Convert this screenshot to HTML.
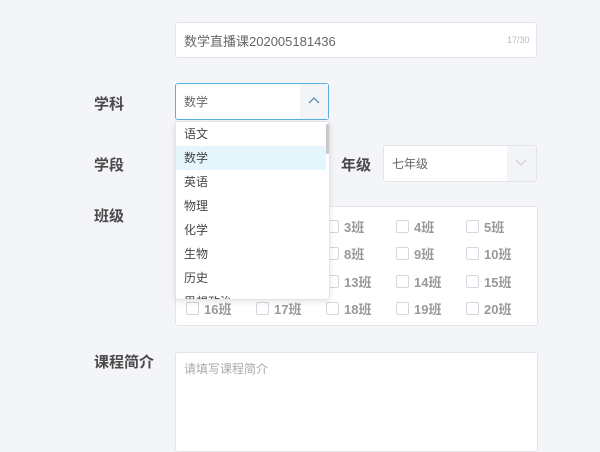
<!DOCTYPE html>
<html><head><meta charset="utf-8"><style>
*{box-sizing:border-box;margin:0;padding:0}
body{width:600px;height:435px;overflow:hidden;background:#f4f5f9;font-family:"Liberation Sans","Noto Sans CJK SC",sans-serif;position:relative;color:#555}
.a{position:absolute}
.box{position:absolute;background:#fff;border:1px solid #e2e4ea;border-radius:3px}
.lbl{position:absolute;font-size:15px;font-weight:bold;color:#4a4a4a}
.cb{position:absolute;width:13px;height:13px;border:1px solid #d4d7de;border-radius:2px;background:#fff}
.ct{position:absolute;font-size:13px;font-weight:bold;color:#999}
.it{position:absolute;left:0;width:150px;height:24px;line-height:24px;padding-left:8px;font-size:12px;color:#444}
</style></head><body>
<div class="box" style="left:175px;top:22px;width:362px;height:36px"></div>
<div class="a" style="left:184px;top:31px;font-size:13px;color:#666">数学直播课202005181436</div>
<div class="a" style="left:507px;top:35px;font-size:9px;color:#bbb">17/30</div>

<div class="lbl" style="left:94px;top:93px">学科</div>
<div class="box" style="left:175px;top:83px;width:154px;height:37px;border-color:#5aaee0"></div>
<div class="a" style="left:300px;top:84px;width:28px;height:35px;background:#f3f4f7"></div>
<div class="a" style="left:184px;top:93px;font-size:12px;color:#666">数学</div>
<svg class="a" style="left:307px;top:96px" width="14" height="10"><path d="M2 7 L7 2 L12 7" fill="none" stroke="#5a8fb0" stroke-width="1.3"/></svg>

<div class="lbl" style="left:94px;top:154px">学段</div>
<div class="lbl" style="left:341px;top:154px">年级</div>
<div class="box" style="left:383px;top:145px;width:154px;height:37px"></div>
<div class="a" style="left:507px;top:146px;width:29px;height:35px;background:#f3f4f7"></div>
<div class="a" style="left:392px;top:155px;font-size:12px;color:#666">七年级</div>
<svg class="a" style="left:514px;top:158px" width="14" height="10"><path d="M2 2 L7 7 L12 2" fill="none" stroke="#ccc" stroke-width="1"/></svg>

<div class="lbl" style="left:94px;top:205px">班级</div>
<div class="box" style="left:175px;top:206px;width:363px;height:120px"></div>
<div id="g"></div>

<div class="lbl" style="left:94px;top:351px">课程简介</div>
<div class="box" style="left:175px;top:352px;width:363px;height:100px"></div>
<div class="a" style="left:184px;top:360px;font-size:12px;color:#aaa">请填写课程简介</div>

<div class="a" style="left:175px;top:121px;width:155px;height:179px;background:#fff;border:1px solid #e2e4ea;border-radius:3px;box-shadow:0 2px 6px rgba(0,0,0,.1);overflow:hidden">
<div class="it" style="top:0">语文</div>
<div class="it" style="top:24px;background:#e4f6fb">数学</div>
<div class="it" style="top:48px">英语</div>
<div class="it" style="top:72px">物理</div>
<div class="it" style="top:96px">化学</div>
<div class="it" style="top:120px">生物</div>
<div class="it" style="top:144px">历史</div>
<div class="it" style="top:168px">思想政治</div>
<div class="a" style="left:150px;top:2px;width:3px;height:30px;background:#c8c8c8;border-radius:2px"></div>
</div>
<script>
var h='',ys=[226,253,281,308],xs=[186,256,326,396,466];
for(var r=0;r<4;r++)for(var c=0;c<5;c++){var n=r*5+c+1;
h+='<div class="cb" style="left:'+xs[c]+'px;top:'+(ys[r]-6)+'px"></div><div class="ct" style="left:'+(xs[c]+18)+'px;top:'+(ys[r]-9)+'px">'+n+'班</div>';}
document.getElementById('g').innerHTML=h;
</script>
</body></html>
